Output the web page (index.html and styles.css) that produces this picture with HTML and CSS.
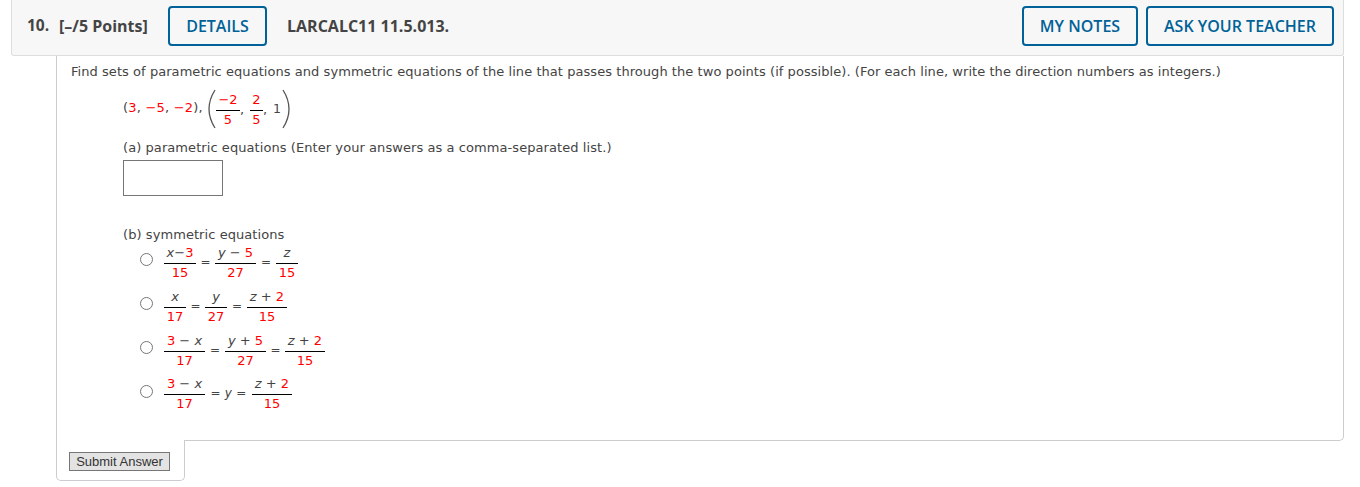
FILE: index.html
```html
<!DOCTYPE html>
<html lang="en">

<head>
    <meta charset="UTF-8">
    <meta name="viewport" content="width=device-width, initial-scale=1.0">
    <title>LARCALC11 11.5.013.</title>
    <link rel="stylesheet" href="styles.css">
</head>

<body>
    <div class="question">
        <div class="header">
            <span class="number">10.</span>
            <span class="points">[–/5 Points]</span>
            <a class="btn details">DETAILS</a>
            <span class="name">LARCALC11 11.5.013.</span>
            <a class="btn notes">MY NOTES</a>
            <a class="btn teacher">ASK YOUR TEACHER</a>
        </div>
        <div class="content">
            <p class="intro">Find sets of parametric equations and symmetric equations of the line that passes through the two points (if possible). (For each line, write the direction numbers as integers.)</p>
            <div class="parts">
                <div class="given">
                    <span class="point">(<b>3</b>, <b>−5</b>, <b>−2</b>),</span>
                    <svg class="paren" width="8" height="40" viewBox="0 0 8 40"><path d="M7 1Q-5 20 7 39"/></svg>
                    <span class="frac f25"><b>−2</b><b>5</b></span>
                    <span class="comma">,</span>
                    <span class="frac f13"><b>2</b><b>5</b></span>
                    <span class="comma">,</span>
                    <span class="one">1</span>
                    <svg class="paren" width="8" height="40" viewBox="0 0 8 40"><path d="M1 1Q13 20 1 39"/></svg>
                </div>
                <p class="label-a">(a) parametric equations (Enter your answers as a comma-separated list.)</p>
                <div class="answer"></div>
                <p class="label-b">(b) symmetric equations</p>
                <ul class="choices">
                    <li>
                        <i class="radio"></i>
                        <span class="frac f32"><span><i>x</i>−<b>3</b></span><b>15</b></span>
                        <span class="eq">=</span>
                        <span class="frac f41"><span><i>y</i> − <b>5</b></span><b>27</b></span>
                        <span class="eq wide">=</span>
                        <span class="frac f22"><i>z</i><b>15</b></span>
                    </li>
                    <li>
                        <i class="radio"></i>
                        <span class="frac f22"><i>x</i><b>17</b></span>
                        <span class="eq">=</span>
                        <span class="frac f22"><i>y</i><b>27</b></span>
                        <span class="eq wide">=</span>
                        <span class="frac f40"><span><i>z</i> + <b>2</b></span><b>15</b></span>
                    </li>
                    <li>
                        <i class="radio"></i>
                        <span class="frac f41"><span><b>3</b> − <i>x</i></span><b>17</b></span>
                        <span class="eq wide">=</span>
                        <span class="frac f41"><span><i>y</i> + <b>5</b></span><b>27</b></span>
                        <span class="eq">=</span>
                        <span class="frac f40"><span><i>z</i> + <b>2</b></span><b>15</b></span>
                    </li>
                    <li>
                        <i class="radio"></i>
                        <span class="frac f41"><span><b>3</b> − <i>x</i></span><b>17</b></span>
                        <span class="eq y">= <i>y</i> =</span>
                        <span class="frac f40"><span><i>z</i> + <b>2</b></span><b>15</b></span>
                    </li>
                </ul>
            </div>
        </div>
        <div class="submit"><button>Submit Answer</button></div>
    </div>
</body>

</html>
```

FILE: styles.css
```css
body,
p,
ul {
    margin: 0;
}

ul {
    padding-left: 0;
    list-style: none;
}

body {
    background-color: #fff;
    color: #444;
    font-family: Verdana, "DejaVu Sans", sans-serif;
    font-size: 13px;
}

.question {
    width: 1333px;
    margin-left: 11px;
}

.header {
    display: flex;
    box-sizing: border-box;
    height: 56px;
    padding: 6px 9px 0 15px;
    border: 1px solid #ddd;
    border-top: none;
    border-radius: 0 0 3px 3px;
    background-color: #f7f7f7;
    font: bold 16px/40px "Open Sans", sans-serif;
    white-space: nowrap;
}

.number {
    width: 32px;
    font-size: 15.5px;
    line-height: 38px;
}

.points {
    width: 109px;
}

.btn {
    box-sizing: border-box;
    height: 40px;
    border: 2px solid #006298;
    border-radius: 4px;
    color: #006298;
    font-weight: 600;
    line-height: 37px;
    text-align: center;
}

.details {
    width: 99px;
    margin-right: 20px;
}

.notes {
    width: 116px;
    margin-left: auto;
    margin-right: 8px;
}

.teacher {
    width: 188px;
}

.content {
    box-sizing: border-box;
    width: 1288px;
    height: 385px;
    margin-left: 45px;
    padding-left: 14px;
    border: 1px solid #ccc;
    border-top: none;
    border-radius: 0 0 5px 0;
}

.intro {
    padding-top: 6px;
    letter-spacing: 0.053px;
    line-height: 20px;
    white-space: nowrap;
}

.parts {
    padding-left: 52px;
}

.given {
    display: flex;
    align-items: center;
    height: 40px;
    margin-top: 7px;
}

b {
    color: #f00;
    font-weight: normal;
}

.point {
    width: 85px;
    margin-top: -4px;
    letter-spacing: 0.2px;
    white-space: nowrap;
}

.paren {
    fill: none;
    stroke: #555;
    stroke-width: 1.3;
}

.comma {
    width: 10px;
    padding-left: 0;
}

.one {
    width: 9px;
    margin-top: -2px;
    font-size: 12.5px;
}

.frac {
    display: flex;
    flex-direction: column;
    align-items: center;
    line-height: 18px;
    white-space: nowrap;
}

.frac > :first-child {
    align-self: stretch;
    padding-bottom: 1px;
    border-bottom: 1px solid #000;
    text-align: center;
}

.given .frac {
    margin-top: 1px;
}

.f13 {
    width: 13px;
}

.f22 {
    width: 22px;
}

.f25 {
    width: 24px;
}

.f32 {
    width: 32px;
}

.f40 {
    width: 40px;
}

.f41 {
    width: 41px;
}

.label-a {
    margin-top: 9px;
    letter-spacing: 0.07px;
    line-height: 20px;
}

.answer {
    box-sizing: border-box;
    width: 100px;
    height: 36px;
    margin-top: 2px;
    border: 1px solid #767676;
}

.label-b {
    margin-top: 29px;
    letter-spacing: 0.07px;
    line-height: 20px;
}

.choices {
    margin-top: -1px;
}

.choices li {
    display: flex;
    align-items: center;
    height: 38px;
    padding-left: 17px;
    margin-bottom: 6px;
}

.choices li:nth-child(3) {
    margin-bottom: 5px;
}

.radio {
    box-sizing: border-box;
    width: 13px;
    height: 13px;
    margin-right: 11px;
    margin-top: -7px;
    border: 1px solid #767676;
    border-radius: 50%;
}

.choices li:last-child .radio {
    margin-top: -5px;
}

.eq {
    width: 19px;
    margin-top: -2px;
    font-size: 12px;
    text-align: center;
}

.wide {
    width: 20px;
}

.y {
    width: 47px;
    letter-spacing: 0.2px;
}

.submit {
    box-sizing: border-box;
    width: 129px;
    height: 41px;
    margin: -1px 0 0 45px;
    padding: 12px 0 0 12px;
    border: 1px solid #ccc;
    border-top: none;
    border-radius: 0 0 5px 5px;
    background-color: #fff;
}

.submit button {
    display: block;
    width: 101px;
    height: 19px;
    padding: 0;
    border: 1px solid #767676;
    background-color: #e3e3e3;
    color: #333;
    font: 13px/17px "Liberation Sans", sans-serif;
}
```
